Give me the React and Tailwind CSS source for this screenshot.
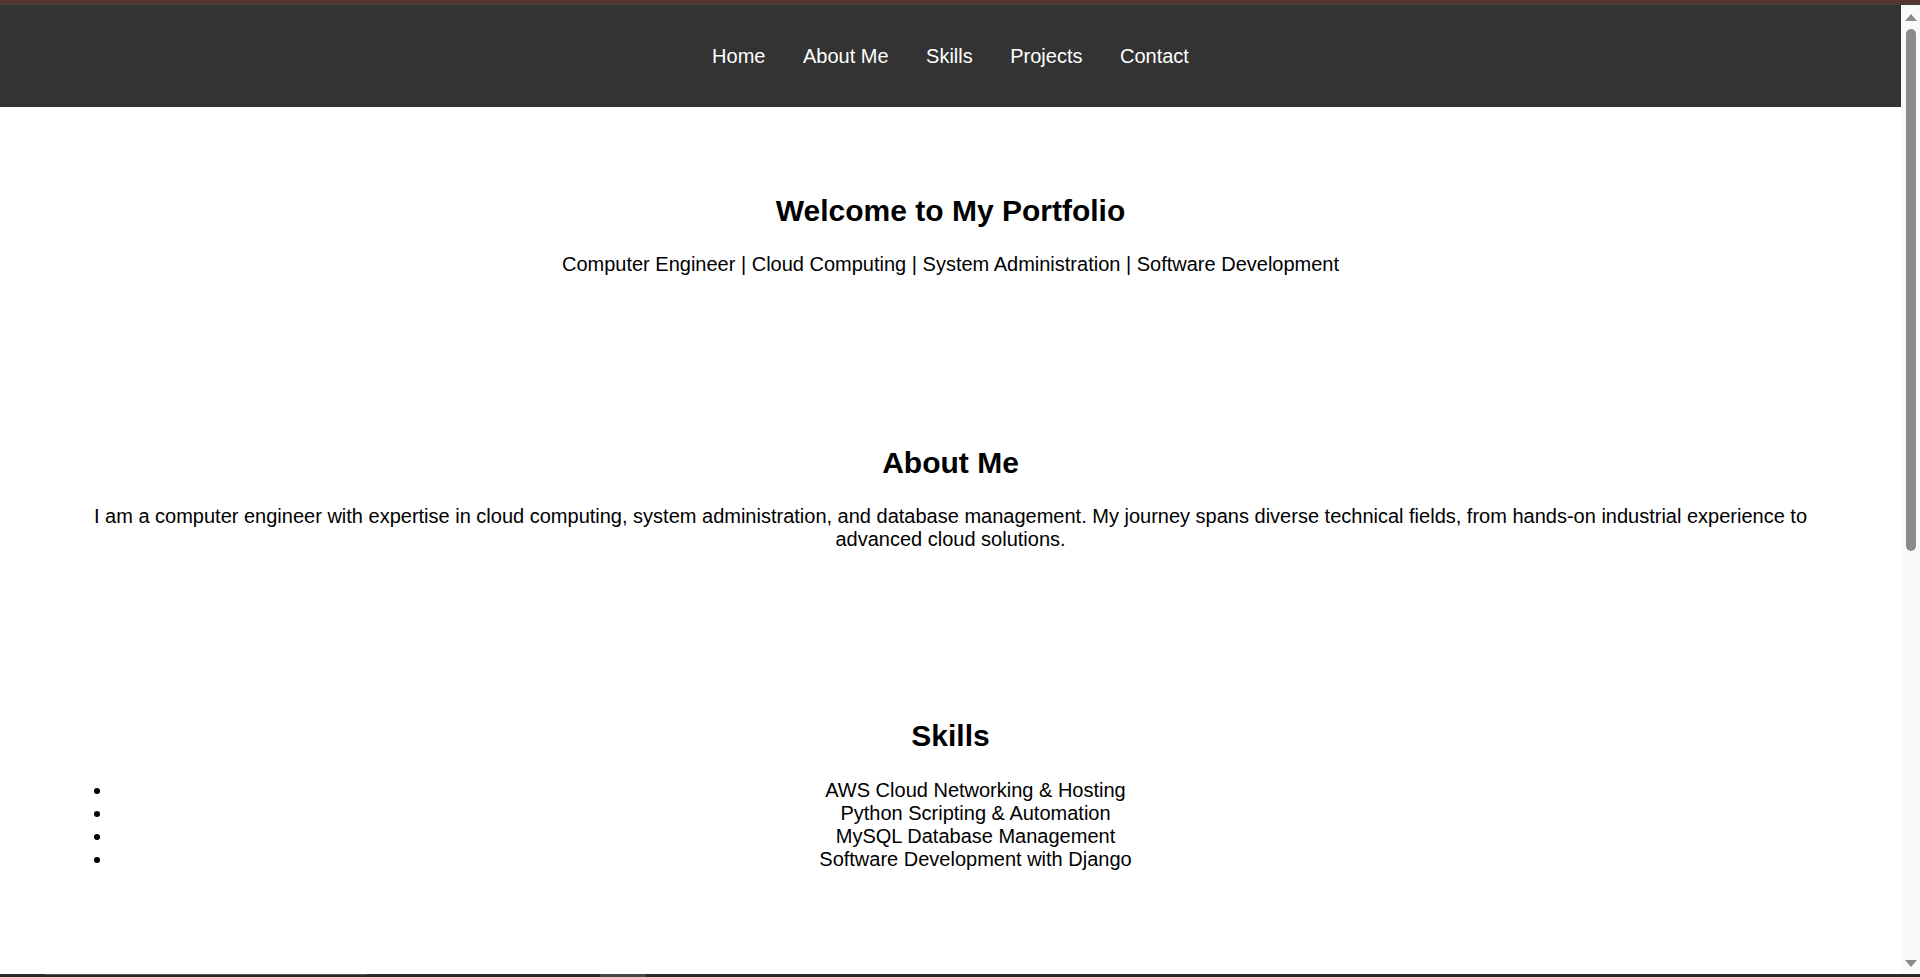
export default function App() {
  return (
    <div className="h-[977px] w-[1920px] overflow-hidden flex flex-col bg-white text-black font-['Liberation_Sans',Arial,sans-serif]">
      <div className="h-[4px] bg-[#55362f] shrink-0" />
      <div className="h-[1px] bg-[#4a3c38] shrink-0" />
      <div className="flex flex-1 min-h-0">
        <div className="flex-1 min-w-0 flex flex-col overflow-hidden">
          <nav className="h-[102px] shrink-0 bg-[#333333] flex items-center justify-center gap-[37.5px] text-white text-[20px] leading-[23px]">
            <a>Home</a>
            <a>About Me</a>
            <a>Skills</a>
            <a>Projects</a>
            <a>Contact</a>
          </nav>
          <section className="px-[62.5px] pt-[86.5px] pb-[82.5px] text-center">
            <h2 className="text-[30px] leading-[34.5px] font-bold">Welcome to My Portfolio</h2>
            <p className="mt-[25px] text-[20px] leading-[23px]">
              Computer Engineer | Cloud Computing | System Administration | Software Development
            </p>
          </section>
          <section className="px-[62.5px] pt-[87.5px] pb-[80.5px] text-center">
            <h2 className="text-[30px] leading-[34.5px] font-bold">About Me</h2>
            <p className="mt-[24px] text-[20px] leading-[23px]">
              I am a computer engineer with expertise in cloud computing, system administration, and database management. My journey spans diverse technical fields, from hands-on industrial experience to advanced cloud solutions.
            </p>
          </section>
          <section className="px-[62.5px] pt-[87.5px] pb-[82.5px] text-center">
            <h2 className="text-[30px] leading-[34.5px] font-bold">Skills</h2>
            <ul className="mt-[26px] pl-[50px] list-disc list-outside text-[20px] leading-[23px]">
              <li>AWS Cloud Networking &amp; Hosting</li>
              <li>Python Scripting &amp; Automation</li>
              <li>MySQL Database Management</li>
              <li>Software Development with Django</li>
            </ul>
          </section>
        </div>
        <div className="w-[19px] shrink-0 bg-[#fafafa] flex flex-col items-center pt-[9px] pb-[7px]">
          <svg width="12" height="7" viewBox="0 0 12 7" className="shrink-0">
            <polygon points="6,0 12,7 0,7" fill="#8a8a8a" />
          </svg>
          <div className="mt-[8px] w-[10px] h-[522px] rounded-full bg-[#8b8b8b] shrink-0" />
          <div className="flex-1" />
          <svg width="12" height="7" viewBox="0 0 12 7" className="shrink-0">
            <polygon points="0,0 12,0 6,7" fill="#8a8a8a" />
          </svg>
        </div>
      </div>
      <div className="h-[3px] shrink-0 bg-[#2b2b2b] flex">
        <div className="w-[45px]" />
        <div className="w-[322px] border-t border-[#555555]" />
        <div className="w-[233px]" />
        <div className="w-[46px] bg-[#474747]" />
      </div>
    </div>
  );
}
